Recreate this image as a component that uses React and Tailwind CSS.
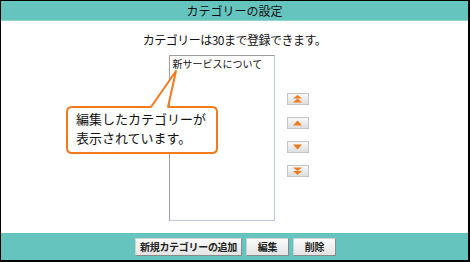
export default function App() {
  const font = { fontFamily: '"Noto Sans CJK JP", "Noto Sans", sans-serif' };
  const Arrow = ({ type }) => (
    <div className="w-[22px] h-[12px] border border-[#c4c4c4] bg-gradient-to-b from-[#fafafa] to-[#dedede] flex items-center justify-center">
      <svg width="9" height="8" viewBox="0 0 9 8">
        {type === "top" && (
          <>
            <polygon points="4.5,0 9,3.5 0,3.5" fill="#f47a20" />
            <polygon points="4.5,3.5 9,7.5 0,7.5" fill="#f47a20" />
          </>
        )}
        {type === "up" && <polygon points="4.5,1.5 9,6.5 0,6.5" fill="#f47a20" />}
        {type === "down" && <polygon points="0,1.5 9,1.5 4.5,6.5" fill="#f47a20" />}
        {type === "bottom" && (
          <>
            <polygon points="0,0.5 9,0.5 4.5,4" fill="#f47a20" />
            <polygon points="0,4 9,4 4.5,8" fill="#f47a20" />
          </>
        )}
      </svg>
    </div>
  );
  const Btn = ({ children, w }) => (
    <div
      className={`${w} h-[18px] border border-[#8a8a8a] border-t-[#d0d0d0] border-l-[#d0d0d0] bg-gradient-to-b from-[#fbfbfb] to-[#e4e4e4] flex items-center justify-center text-[10px] font-bold text-[#222] tracking-[-0.3px]`}
    >
      {children}
    </div>
  );
  return (
    <div style={font} className="w-[470px] h-[262px] border-l border-t border-r-2 border-b-2 border-black flex flex-col bg-white overflow-hidden">
      <div className="h-[20px] bg-[#66c4bf] flex items-center justify-center text-[12px] text-[#111] border-b border-[#8fd3cf]">
        カテゴリーの設定
      </div>
      <div className="relative flex-1 flex flex-col items-center">
        <div className="mt-[11px] text-[12px] leading-[16px] tracking-[-0.5px] text-[#111]">
          カテゴリーは30まで登録できます。
        </div>
        <div className="flex mt-[7px] ml-[8px]">
          <div className="w-[106px] h-[166px] border border-[#a0a0a0] border-r-[#b7cce2] border-b-[#b7cce2] bg-white px-[3px] pt-[1px] text-[10px] leading-[13px] text-[#111]">
            新サービスについて
          </div>
          <div className="ml-[12px] mt-[38px] flex flex-col gap-[12px]">
            <Arrow type="top" />
            <Arrow type="up" />
            <Arrow type="down" />
            <Arrow type="bottom" />
          </div>
        </div>
        <svg className="absolute left-0 top-0" width="470" height="240" viewBox="0 21 470 240">
          <path
            d="M71,107 L150,107 L175,71 L167,107 L211,107 Q216,107 216,112 L216,148 Q216,153 211,153 L71,153 Q66,153 66,148 L66,112 Q66,107 71,107 Z"
            fill="white"
            stroke="#f47a20"
            strokeWidth="2"
            strokeLinejoin="round"
          />
        </svg>
        <div className="absolute left-[75px] top-[88px] text-[13px] leading-[19px] text-[#111]">
          <div>編集したカテゴリーが</div>
          <div>表示されています。</div>
        </div>
      </div>
      <div className="h-[27px] bg-[#66c4bf] flex items-center justify-center gap-[4px] pl-[2px]">
        <Btn w="w-[107px]">新規カテゴリーの追加</Btn>
        <Btn w="w-[43px]">編集</Btn>
        <Btn w="w-[43px]">削除</Btn>
      </div>
    </div>
  );
}
